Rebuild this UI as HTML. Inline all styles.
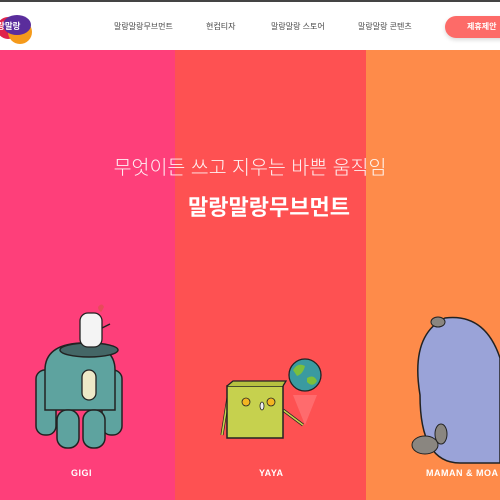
<!DOCTYPE html>
<html><head><meta charset="utf-8"><style>
*{margin:0;padding:0;box-sizing:border-box}
body{width:500px;height:500px;overflow:hidden;position:relative;font-family:"Liberation Sans","Noto Sans CJK KR",sans-serif;background:#fff}
.top{position:absolute;left:0;top:0;width:500px;height:2px;background:#444}
.hdr{position:absolute;left:0;top:2px;width:500px;height:48px;background:#fff}
.nav{position:absolute;top:19px;font-size:8px;color:#444}
.btn{position:absolute;left:445px;top:14px;width:70px;height:22px;border-radius:11px;background:#fd6b68;color:#fff;font-size:8px;font-weight:bold;line-height:22px;padding-left:22px;box-shadow:0 2px 4px rgba(0,0,0,.15)}
.col{position:absolute;top:50px;height:450px}
.h1{position:absolute;top:151px;left:0;width:500px;text-align:center;color:#fff;font-size:19.5px;font-weight:300;opacity:.92}
.h2{position:absolute;top:190px;left:0;width:500px;text-align:center;color:#fff;font-size:22px;font-weight:bold;padding-left:38px}
.nm{position:absolute;top:468px;color:#fff;font-size:9px;font-weight:bold;letter-spacing:.5px}
</style></head><body>
<div class="top"></div>
<div class="hdr">
<svg style="position:absolute;left:0;top:6px" width="34" height="38"><circle cx="8" cy="20" r="11" fill="#e0224a"/><circle cx="20" cy="24" r="12" fill="#f59a1b"/><ellipse cx="17" cy="17" rx="14" ry="10" fill="#5a2d9c"/><text x="-3" y="21" font-size="8.5" fill="#fff" font-family="Noto Sans CJK KR" font-weight="bold">랑말랑</text></svg>
<span class="nav" style="left:114px">말랑말랑무브먼트</span>
<span class="nav" style="left:206px">현컵티자</span>
<span class="nav" style="left:271px">말랑말랑 스토어</span>
<span class="nav" style="left:358px">말랑말랑 콘텐츠</span>
<div class="btn">제휴제안</div>
</div>
<div class="col" style="left:0;width:175px;background:#fe3f7a"></div>
<div class="col" style="left:175px;width:191px;background:#fe5152"></div>
<div class="col" style="left:366px;width:134px;background:#fe8b4a"></div>
<div class="h1">무엇이든 쓰고 지우는 바쁜 움직임</div>
<div class="h2">말랑말랑무브먼트</div>
<svg style="position:absolute;left:0;top:300px" width="500" height="200">
<path d="M98 7 q4-5 6 0 q-2 4-3 5 q-3-2-3-5z" fill="#e84a5a"/>
<rect x="36" y="70" width="20" height="65" rx="9" fill="#5ea39f" stroke="#222" stroke-width="1.5"/>
<rect x="102" y="70" width="20" height="65" rx="9" fill="#5ea39f" stroke="#222" stroke-width="1.5"/>
<path d="M45 70 q0-25 35-27 q35 2 35 27 v40 h-70z" fill="#5ea39f" stroke="#222" stroke-width="1.5"/>
<rect x="57" y="110" width="22" height="38" rx="10" fill="#5ea39f" stroke="#222" stroke-width="1.5"/>
<rect x="83" y="110" width="22" height="38" rx="10" fill="#5ea39f" stroke="#222" stroke-width="1.5"/>
<ellipse cx="89" cy="50" rx="29" ry="7" fill="#466" stroke="#222" stroke-width="1.5"/>
<rect x="82" y="70" width="14" height="30" rx="7" fill="#eee9c8" stroke="#222" stroke-width="1.3"/>
<rect x="80" y="13" width="22" height="34" rx="8" fill="#f4f4f4" stroke="#222" stroke-width="1.3"/>
<path d="M102 28 l8-4" stroke="#222" stroke-width="1.5"/>
<path d="M230 85 l-8 50 M283 110 l20 15" stroke="#222" stroke-width="3"/>
<path d="M230 85 l-8 50 M283 110 l20 15" stroke="#c6d14e" stroke-width="1.6"/>
<path d="M305 95 l-12 0 l12 30 l12-30z" fill="#ff7d80" opacity=".6"/>
<rect x="227" y="86" width="56" height="52" fill="#c6d14e" stroke="#222" stroke-width="1.5"/>
<path d="M227 86 l6-5 h53 l-3 5" fill="#b6c140" stroke="#222" stroke-width="1.3"/>
<circle cx="246" cy="102" r="4" fill="#f3b521" stroke="#222" stroke-width=".8"/><circle cx="271" cy="102" r="4" fill="#f3b521" stroke="#222" stroke-width=".8"/>
<ellipse cx="262" cy="106" rx="2" ry="4" fill="#eee" stroke="#222" stroke-width=".8"/>
<circle cx="305" cy="75" r="16" fill="#3a9aa0" stroke="#222" stroke-width="1.3"/>
<path d="M293 70 q5-8 12-4 q-2 8-8 10z M307 78 q7-4 10 3 q-4 7-10 1z" fill="#7bbf3c"/>
<path d="M420 95 q-10-60 25-77 q40-5 55 40 v105 h-40 q-40 0-40-68z" fill="#9aa3d8" stroke="#222" stroke-width="1.5"/>
<ellipse cx="438" cy="22" rx="7" ry="5" fill="#8a8680" stroke="#222" stroke-width="1"/>
<ellipse cx="425" cy="145" rx="13" ry="9" fill="#8a8680" stroke="#222" stroke-width="1"/>
<ellipse cx="441" cy="134" rx="6" ry="10" fill="#8a8680" stroke="#222" stroke-width="1"/>
</svg>
<span class="nm" style="left:71px">GIGI</span>
<span class="nm" style="left:259px">YAYA</span>
<span class="nm" style="left:426px">MAMAN &amp; MOA</span>
</body></html>
